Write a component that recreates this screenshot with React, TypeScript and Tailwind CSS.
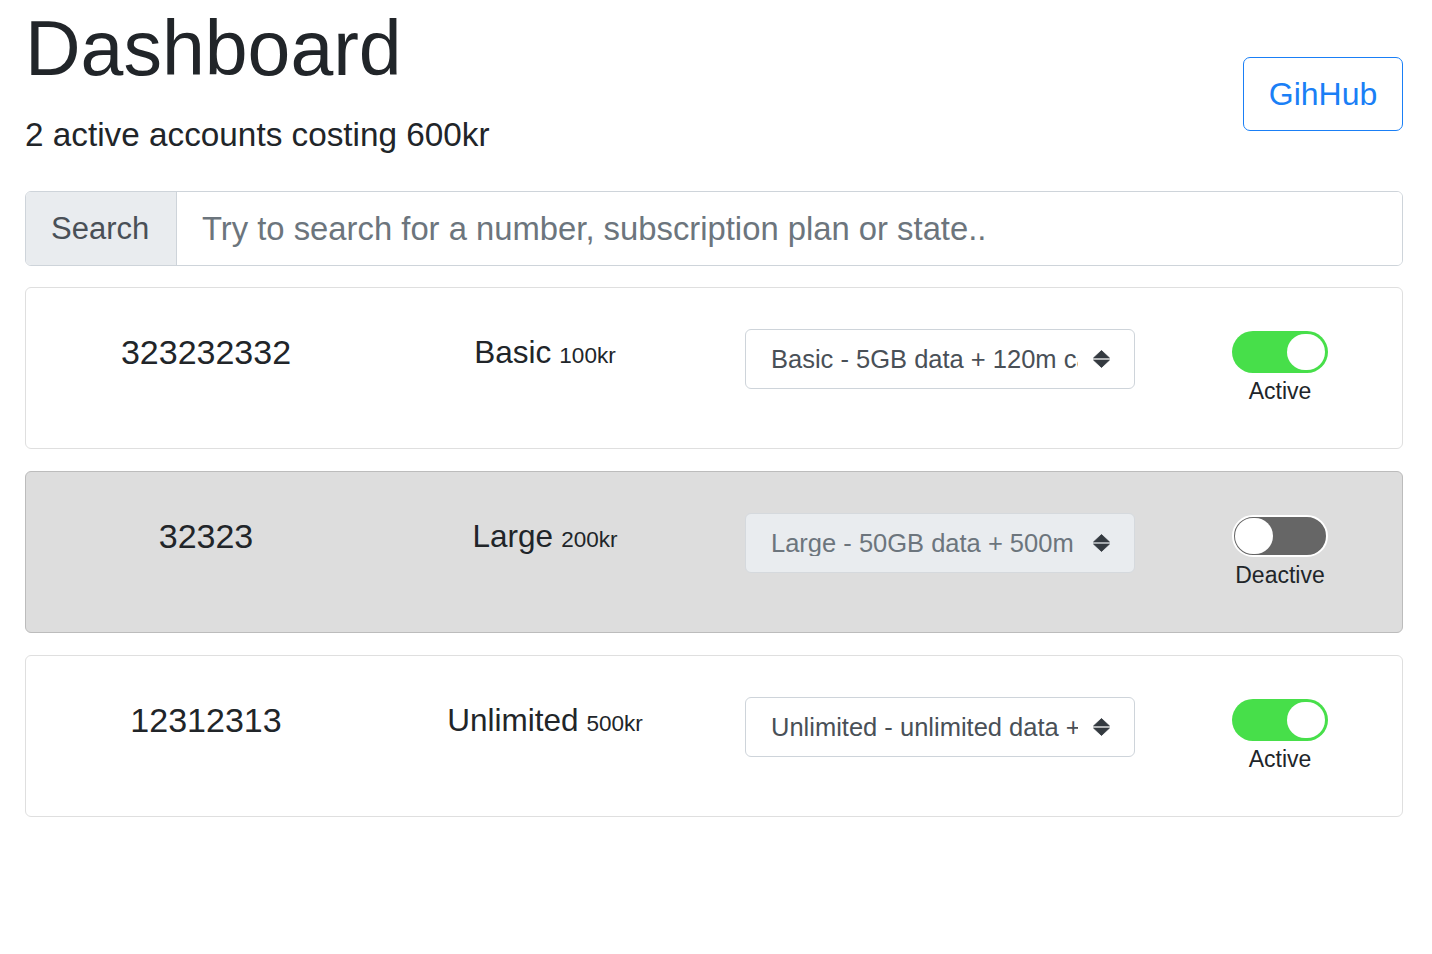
import React from "react";

// ── Account data ─────────────────────────────────────────────
interface Account {
  number: string;
  plan: string;
  price: string;
  option: string;
  active: boolean;
}

const ACCOUNTS: Account[] = [
  { number: "323232332", plan: "Basic", price: "100kr", option: "Basic - 5GB data + 120m calls", active: true },
  { number: "32323", plan: "Large", price: "200kr", option: "Large - 50GB data + 500m calls", active: false },
  { number: "12312313", plan: "Unlimited", price: "500kr", option: "Unlimited - unlimited data + calls", active: true },
];

const FONT = "font-['Liberation_Sans',Arial,sans-serif]";

function SelectArrows() {
  return (
    <svg width="17" height="18" viewBox="0 0 16 17" className="shrink-0">
      <path d="M8 0.5 L15.5 7.5 H0.5 Z" fill="#343a40" strokeLinejoin="round" stroke="#343a40" strokeWidth="0.8" />
      <path d="M0.5 9.5 H15.5 L8 16.5 Z" fill="#343a40" strokeLinejoin="round" stroke="#343a40" strokeWidth="0.8" />
    </svg>
  );
}

function Toggle({ on }: { on: boolean }) {
  return on ? (
    <div className="flex h-[42px] w-[96px] items-center justify-end rounded-full bg-[#47df4a] p-[3px]">
      <div className="h-[36px] w-[38px] rounded-full bg-white" />
    </div>
  ) : (
    <div className="flex h-[42px] w-[96px] items-center justify-start rounded-full border-[2px] border-white bg-[#666666] p-[1px]">
      <div className="h-[36px] w-[38px] rounded-full bg-white" />
    </div>
  );
}

function AccountCard({ a }: { a: Account }) {
  return (
    <div
      className={
        a.active
          ? "flex h-[162px] items-start rounded-[6px] border-[1.5px] border-[#dfdfdf] bg-white pt-[41px]"
          : "flex h-[162px] items-start rounded-[6px] border-[1.5px] border-[#bcbcbc] bg-[#dddddd] pt-[41px]"
      }
    >
      {/* number */}
      <div className="flex w-[360px] justify-center pt-[6px]">
        <span className="text-[34px] leading-none text-[#212529]">{a.number}</span>
      </div>

      {/* plan + price */}
      <div className="flex w-[318px] items-baseline justify-center gap-[8px] pt-[8px] text-[#212529]">
        <span className="text-[31.5px] leading-none">{a.plan}</span>
        <span className="text-[22.5px] leading-none">{a.price}</span>
      </div>

      {/* plan select */}
      <div className="pl-[41px]">
        <div
          className={
            a.active
              ? "flex h-[60px] w-[390px] items-center rounded-[6px] border-[1.5px] border-[#ced4da] bg-white pl-[25px] text-[#495057]"
              : "flex h-[60px] w-[390px] items-center rounded-[6px] border-[1.5px] border-[#d5d9dd] bg-[#e9ecef] pl-[25px] text-[#6c757d]"
          }
        >
          <span className="w-[307px] overflow-hidden whitespace-nowrap text-[25.5px] leading-none">{a.option}</span>
          <span className="ml-[15px]">
            <SelectArrows />
          </span>
        </div>
      </div>

      {/* status toggle */}
      <div className="ml-[97px] flex w-[96px] flex-col items-center pt-[2px]">
        <Toggle on={a.active} />
        <span className="mt-[7px] whitespace-nowrap text-[23px] leading-none text-[#212529]">
          {a.active ? "Active" : "Deactive"}
        </span>
      </div>
    </div>
  );
}

export default function App() {
  const activeCount = ACCOUNTS.filter((a) => a.active).length;

  return (
    <div className={`${FONT} min-h-[954px] bg-white`}>
      <div className="ml-[25px] w-[1378px]">
        {/* ── Header ── */}
        <div className="flex items-start justify-between">
          <div className="pt-[10px]">
            <h1 className="text-[77px] leading-none font-normal text-[#212529]">Dashboard</h1>
            <p className="mt-[31px] text-[33.3px] leading-none text-[#212529]">
              {activeCount} active accounts costing 600kr
            </p>
          </div>
          <button className="mt-[57px] flex h-[74px] w-[160px] items-center justify-center rounded-[7px] border-[1.5px] border-[#1a7ff6] text-[32px] leading-none text-[#1a7ff6]">
            GihHub
          </button>
        </div>

        {/* ── Search ── */}
        <div className="mt-[40px] flex h-[75px] rounded-[6px] border-[1.5px] border-[#ced4da]">
          <div className="flex w-[151px] items-center rounded-l-[5px] border-r-[1.5px] border-[#ced4da] bg-[#e9ecef] pl-[25px] text-[31px] leading-none text-[#495057]">
            Search
          </div>
          <input
            className="flex-1 rounded-r-[5px] bg-white pl-[25px] text-[32.8px] leading-none text-[#495057] outline-none placeholder:text-[#6c757d]"
            placeholder="Try to search for a number, subscription plan or state.."
          />
        </div>

        {/* ── Accounts ── */}
        <div className="mt-[21px] flex flex-col gap-[22px]">
          {ACCOUNTS.map((a) => (
            <AccountCard key={a.number} a={a} />
          ))}
        </div>
      </div>
    </div>
  );
}
